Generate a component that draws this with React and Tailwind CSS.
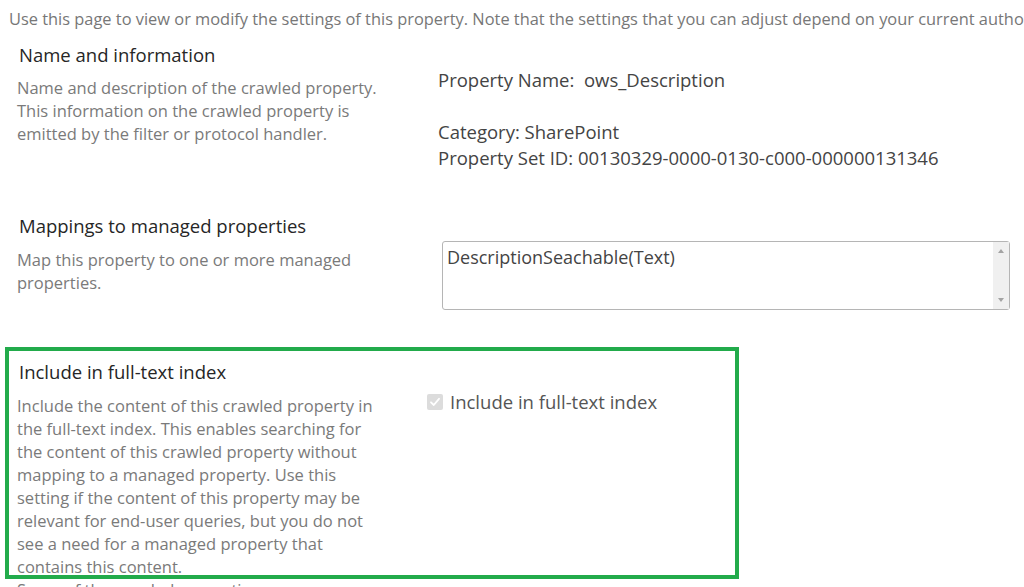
import React from 'react';

const font = { fontFamily: '"Segoe UI", "Open Sans", "Noto Sans", sans-serif' };

const DisabledCheck = () => (
  <span className="flex h-[16px] w-[16px] items-center justify-center rounded-[2px] bg-[#dcdcdc]">
    <svg width="12" height="12" viewBox="0 0 12 12" fill="none">
      <path d="M2 6.3 4.8 9 10 2.8" stroke="#ffffff" strokeWidth="1.8" strokeLinecap="round" strokeLinejoin="round" />
    </svg>
  </span>
);

const MappingsBox = () => (
  <div className="flex h-[69px] w-[568px] rounded-[3px] border border-[#b5b5b5] bg-white">
    <div className="flex-1 pl-[4px] pt-[2px] text-[18px] leading-[26px] text-[#444]">DescriptionSeachable(Text)</div>
    <div className="flex w-[16px] flex-col items-center justify-between bg-[#f0f0f0] py-[7px]">
      <span className="h-0 w-0 border-x-[3.5px] border-b-[4px] border-x-transparent border-b-[#a3a3a3]" />
      <span className="h-0 w-0 border-x-[3.5px] border-t-[4px] border-x-transparent border-t-[#a3a3a3]" />
    </div>
  </div>
);

const Section = ({ title, children, right, rightPad, className = '' }) => (
  <div className={`flex ${className}`}>
    <div className="w-[421px] shrink-0">
      <div className="ml-[2px] text-[18.5px] leading-[24px] text-[#262626]">{title}</div>
      <div className="w-[368px] text-[16.5px] leading-[23px] text-[#7a7a7a]">{children}</div>
    </div>
    <div className={rightPad}>{right}</div>
  </div>
);

export default function App() {
  return (
    <div className="h-[587px] w-[1024px] overflow-hidden bg-white" style={font}>
      <p className="whitespace-nowrap pl-[9px] pt-[7px] text-[16.4px] leading-[24px] text-[#777]">
        Use this page to view or modify the settings of this property. Note that the settings that you can adjust depend on your current authorization level.
      </p>

      <div className="pl-[17px]">
        <Section
          className="mt-[12px]"
          title="Name and information"
          rightPad="pt-[24px]"
          right={
            <div className="text-[18.5px] leading-[26px] text-[#444]">
              <div>Property Name:&nbsp; ows_Description</div>
              <div className="h-[26px]" />
              <div>Category: SharePoint</div>
              <div>Property Set ID: 00130329-0000-0130-c000-000000131346</div>
            </div>
          }
        >
          <p className="mt-[9px]">
            Name and description of the crawled property. This information on the crawled property is emitted by the filter or protocol handler.
          </p>
        </Section>

        <Section
          className="mt-[43px]"
          title="Mappings to managed properties"
          rightPad="pt-[27px] ml-[4px]"
          right={<MappingsBox />}
        >
          <p className="mt-[10px]">Map this property to one or more managed properties.</p>
        </Section>

        <div className="relative mt-[37px]">
          <div className="pointer-events-none absolute left-[-12px] top-0 z-10 h-[232px] w-[734px] border-[4px] border-[#22ab4b]" />
          <div className="pt-[13px]">
            <Section
              title="Include in full-text index"
              rightPad="pt-[29px] ml-[-11px]"
              right={
                <label className="flex items-center gap-[7px] text-[18.5px] leading-[26px]">
                  <DisabledCheck />
                  <span className="text-[#555]">Include in full-text index</span>
                </label>
              }
            >
              <p className="mt-[10px]">
                Include the content of this crawled property in the full-text index. This enables searching for the content of this crawled property without mapping to a managed property. Use this setting if the content of this property may be relevant for end-user queries, but you do not see a need for a managed property that contains this content.
              </p>
              <p>Some of the crawled properties</p>
            </Section>
          </div>
        </div>
      </div>
    </div>
  );
}
